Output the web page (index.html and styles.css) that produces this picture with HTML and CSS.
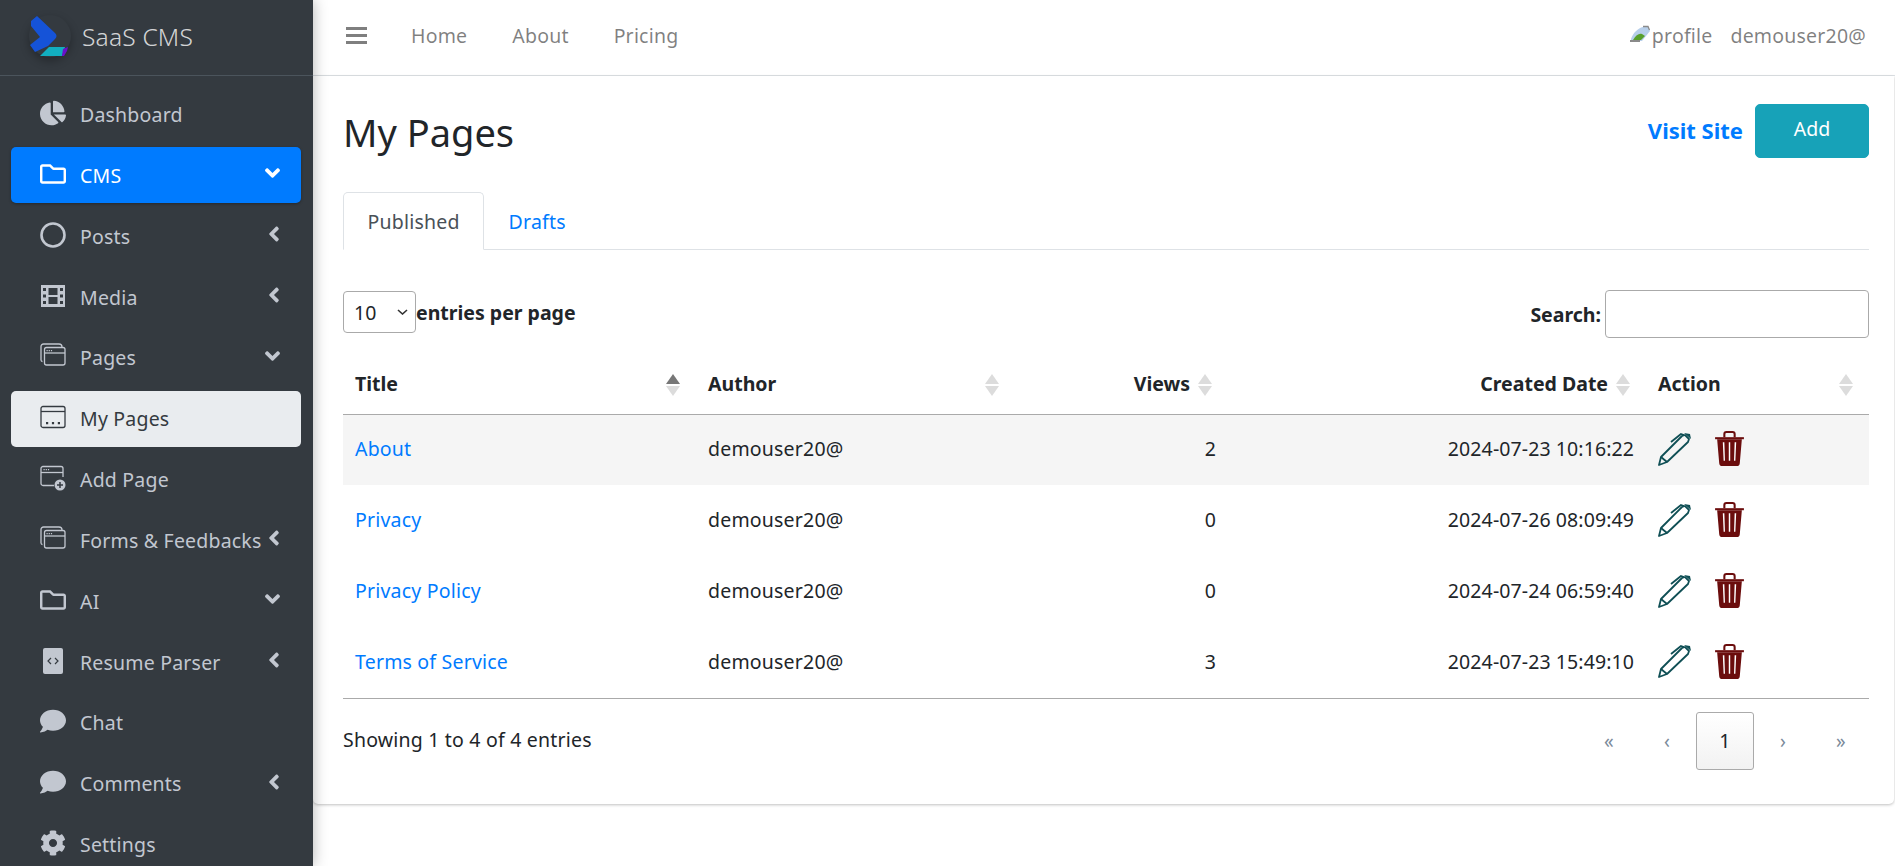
FILE: index.html
```html
<!DOCTYPE html>
<html lang="en">
<head>
    <meta charset="UTF-8">
    <meta name="viewport" content="width=device-width, initial-scale=1.0">
    <title>My Pages | SaaS CMS</title>
    <link rel="stylesheet" href="styles.css">
</head>
<body>

    <!-- Icon set -->
    <svg class="sprite" xmlns="http://www.w3.org/2000/svg">
        <symbol id="i-pie" viewBox="0 0 544 512"><path fill="currentColor" d="M527.79 288H290.5l158.03 158.03c6.04 6.04 15.98 6.53 22.19.68 38.7-36.46 65.32-85.61 73.13-140.86 1.34-9.46-6.51-17.85-16.06-17.85zm-15.83-64.8C503.72 103.74 408.26 8.28 288.8.04 279.68-.59 272 7.1 272 16.24V240h223.77c9.14 0 16.82-7.68 16.19-16.8zM224 288V50.71c0-9.55-8.39-17.4-17.84-16.06C86.99 51.49-4.1 155.6.14 280.37 4.5 408.51 114.83 513.59 243.03 511.98c50.4-.63 96.97-16.87 135.26-44.03 7.9-5.6 8.42-17.23 1.57-24.08L224 288z"/></symbol>
        <symbol id="i-folder" viewBox="0 0 512 512"><path fill="currentColor" d="M464 128H272l-54.63-54.63c-6-6-14.14-9.37-22.63-9.37H48C21.49 64 0 85.49 0 112v288c0 26.51 21.49 48 48 48h416c26.51 0 48-21.49 48-48V176c0-26.51-21.49-48-48-48zm0 272H48V112h140.12l54.63 54.63c6 6 14.14 9.37 22.63 9.37H464v224z"/></symbol>
        <symbol id="i-circle" viewBox="0 0 26 26"><circle cx="13" cy="13" r="11.5" fill="none" stroke="currentColor" stroke-width="2.6"/></symbol>
        <symbol id="i-film" viewBox="0 0 26 26"><path fill="currentColor" fill-rule="evenodd" d="M1 2h24v22H1zM8.500 5v7h9V5zM8.500 14v7h9v-7zM3 5v3h3V5zM3 11.500v3h3v-3zM3 18v3h3v-3zM20 5v3h3V5zM20 11.500v3h3v-3zM20 18v3h3v-3z"/></symbol>
        <symbol id="i-stack" viewBox="0 0 26 26"><g fill="none" stroke="currentColor" stroke-width="1.3"><rect x="4.5" y="4.5" width="20.5" height="17.5" rx="2"/><path d="M4.5 10h20.500"/><path d="M2.500 18.500A1.800 1.800 0 0 1 1 17V3.500A2.500 2.500 0 0 1 3.500 1H19a3 3 0 0 1 3 3"/></g><path fill="currentColor" d="M6.500 7h1.200v1.200H6.500zM8.700 7h1.200v1.200H8.700zM10.900 7h1.200v1.200h-1.200z"/></symbol>
        <symbol id="i-window" viewBox="0 0 26 26"><g fill="none" stroke="currentColor" stroke-width="1.300"><rect x="1" y="2.500" width="24" height="21" rx="2"/><path d="M1 7.500h24"/></g><path fill="currentColor" d="M6 18h2.200v2.200H6zM11.900 18h2.200v2.200h-2.200zM17.800 18H20v2.200h-2.200z"/></symbol>
        <symbol id="i-window-plus" viewBox="0 0 26 26"><g fill="none" stroke="currentColor" stroke-width="1.300"><path d="M14 20.500H3A2 2 0 0 1 1 18.500V3.500a2 2 0 0 1 2-2h18a2 2 0 0 1 2 2V12"/><path d="M1 7.500h22"/></g><path fill="currentColor" d="M3.500 4h1.200v1.200H3.500zM5.700 4h1.200v1.200H5.700zM7.900 4h1.200v1.200H7.900z"/><circle cx="20" cy="20" r="5.500" fill="currentColor"/><path d="M20 17v6M17 20h6" stroke="#343a40" stroke-width="1.500"/></symbol>
        <symbol id="i-code" viewBox="0 0 20 26"><rect width="20" height="26" rx="2" fill="currentColor"/><path d="M8 10l-3 3 3 3M12 10l3 3-3 3" fill="none" stroke="#343a40" stroke-width="1.200"/></symbol>
        <symbol id="i-comment" viewBox="0 0 512 512"><path fill="currentColor" d="M256 32C114.600 32 0 125.100 0 240c0 49.600 21.400 95 57 130.700C44.500 421.100 2.700 466 2.200 466.500c-2.200 2.300-2.800 5.700-1.500 8.700S4.800 480 8 480c66.300 0 116-31.800 140.600-51.400 32.700 12.300 69 19.400 107.400 19.400 141.400 0 256-93.100 256-208S397.400 32 256 32z"/></symbol>
        <symbol id="i-cog" viewBox="0 0 512 512"><path fill="currentColor" d="M487.400 315.700l-42.600-24.600c4.300-23.200 4.300-47 0-70.200l42.600-24.600c4.900-2.800 7.100-8.600 5.500-14-11.100-35.600-30-67.800-54.700-94.600-3.800-4.100-10-5.100-14.800-2.300L380.800 110c-17.900-15.400-38.500-27.300-60.800-35.100V25.800c0-5.600-3.900-10.500-9.400-11.700-36.700-8.200-74.300-7.800-109.200 0-5.500 1.200-9.400 6.100-9.400 11.700V75c-22.200 7.900-42.800 19.800-60.800 35.100L88.700 85.500c-4.900-2.800-11-1.900-14.800 2.300-24.700 26.700-43.600 58.900-54.700 94.600-1.700 5.400.6 11.200 5.500 14L67.300 221c-4.300 23.200-4.300 47 0 70.200l-42.600 24.600c-4.900 2.800-7.100 8.600-5.500 14 11.100 35.600 30 67.800 54.700 94.600 3.800 4.100 10 5.100 14.800 2.300l42.600-24.600c17.900 15.400 38.500 27.300 60.800 35.100v49.200c0 5.600 3.900 10.500 9.400 11.700 36.700 8.200 74.300 7.800 109.200 0 5.500-1.200 9.400-6.100 9.400-11.700v-49.200c22.200-7.900 42.800-19.800 60.800-35.100l42.600 24.600c4.900 2.800 11 1.900 14.800-2.300 24.700-26.700 43.600-58.900 54.700-94.600 1.500-5.500-.7-11.300-5.600-14.100zM256 336c-44.100 0-80-35.900-80-80s35.900-80 80-80 80 35.900 80 80-35.900 80-80 80z"/></symbol>
        <symbol id="i-left" viewBox="0 0 256 512"><path fill="currentColor" d="M31.700 239l136-136c9.400-9.400 24.600-9.400 33.900 0l22.600 22.600c9.400 9.400 9.400 24.600 0 33.900L127.900 256l96.400 96.400c9.400 9.400 9.400 24.600 0 33.900L201.700 409c-9.400 9.400-24.600 9.400-33.900 0l-136-136c-9.500-9.400-9.500-24.600-.1-34z"/></symbol>
        <symbol id="i-down" viewBox="0 0 320 512"><path fill="currentColor" d="M143 352.300L7 216.300c-9.400-9.400-9.400-24.600 0-33.900l22.600-22.600c9.400-9.400 24.600-9.400 33.900 0l96.400 96.400 96.400-96.400c9.400-9.400 24.600-9.400 33.900 0l22.600 22.600c9.400 9.400 9.400 24.600 0 33.900l-136 136c-9.200 9.400-24.400 9.400-33.800 0z"/></symbol>
        <symbol id="i-pen" viewBox="0 0 34 34"><g fill="none" stroke="#0f4f55" stroke-width="1.800" stroke-linejoin="round"><path d="M1 33l2-8L24 4l3-1 4 4-1 3-21 20z"/><path d="M3 25l6 5M13 10l10-8 3 1"/></g><path fill="#0f4f55" d="M26 1l6 1 1 5z"/></symbol>
        <symbol id="i-trash" viewBox="0 0 30 34"><path fill="#6b0d0d" d="M1 6h28v2H1z"/><path fill="none" stroke="#6b0d0d" stroke-width="2" d="M10 6V3a2 2 0 0 1 2-2h6a2 2 0 0 1 2 2v3"/><path fill="#6b0d0d" d="M3 8h24l-2 23a3 3 0 0 1-3 3H8a3 3 0 0 1-3-3z"/><path fill="#fff" d="M8.500 11h1.500l.6 18H9.300zM14.300 11h1.400v18h-1.400zM20 11h1.500l-.8 18h-1.300z"/></symbol>
    </svg>

    <aside class="sidebar">
        <div class="brand">
            <span class="brand-logo">
                <svg viewBox="0 0 42 42" width="42" height="42">
                    <path fill="#1553d8" d="M2 6l6-5 18 17c2 2 2 4 0 6l-7 7-13 6-5-7 10-8L2 11z"/>
                    <path fill="#12aebf" d="M11 41l9-9h16l-3 9z"/>
                    <path fill="#6a11cb" d="M34 34l5-2-1 4-3 5h-2z"/>
                </svg>
            </span>
            <span class="brand-text">SaaS CMS</span>
        </div>
        <nav>
            <a class="nav-item"><svg class="nav-icon"><use href="#i-pie"/></svg>Dashboard</a>
            <a class="nav-item nav-primary"><svg class="nav-icon"><use href="#i-folder"/></svg>CMS<svg class="caret-down"><use href="#i-down"/></svg></a>
            <a class="nav-item"><svg class="nav-icon"><use href="#i-circle"/></svg>Posts<svg class="caret-left"><use href="#i-left"/></svg></a>
            <a class="nav-item"><svg class="nav-icon"><use href="#i-film"/></svg>Media<svg class="caret-left"><use href="#i-left"/></svg></a>
            <a class="nav-item"><svg class="nav-icon"><use href="#i-stack"/></svg>Pages<svg class="caret-down"><use href="#i-down"/></svg></a>
            <a class="nav-item nav-current"><svg class="nav-icon"><use href="#i-window"/></svg>My Pages</a>
            <a class="nav-item"><svg class="nav-icon"><use href="#i-window-plus"/></svg>Add Page</a>
            <a class="nav-item"><svg class="nav-icon"><use href="#i-stack"/></svg>Forms &amp; Feedbacks<svg class="caret-left"><use href="#i-left"/></svg></a>
            <a class="nav-item"><svg class="nav-icon"><use href="#i-folder"/></svg>AI<svg class="caret-down"><use href="#i-down"/></svg></a>
            <a class="nav-item"><svg class="nav-icon"><use href="#i-code"/></svg>Resume Parser<svg class="caret-left"><use href="#i-left"/></svg></a>
            <a class="nav-item"><svg class="nav-icon"><use href="#i-comment"/></svg>Chat</a>
            <a class="nav-item"><svg class="nav-icon"><use href="#i-comment"/></svg>Comments<svg class="caret-left"><use href="#i-left"/></svg></a>
            <a class="nav-item"><svg class="nav-icon"><use href="#i-cog"/></svg>Settings</a>
        </nav>
    </aside>

    <div class="main">
        <header class="topbar">
            <span class="hamburger"><i></i><i></i><i></i></span>
            <a class="top-link">Home</a>
            <a class="top-link">About</a>
            <a class="top-link">Pricing</a>
            <span class="top-user">
                <svg class="broken-img" viewBox="0 0 21 18" width="21" height="18">
                    <path fill="#b7cfea" d="M1 14C3 8 8 3 13 2h5l2 4-8 10H1z"/>
                    <path fill="#58a02c" d="M3 15c3-5 6-7 9-6l3 2-4 4z"/>
                    <path fill="none" stroke="#8a8a8a" stroke-width="1.300" d="M13 1.500h5l1.500 3.500"/>
                    <path fill="#8a8a8a" d="M0 15h10v2H0z"/>
                </svg><span class="alt-text">profile</span>
                <span class="user-name">demouser20@</span>
            </span>
        </header>

        <section class="card">
            <div class="page-head">
                <h1>My Pages</h1>
                <div class="page-actions">
                    <a class="visit-link">Visit Site</a>
                    <button class="add-button">Add</button>
                </div>
            </div>

            <div class="tabs">
                <a class="tab tab-active">Published</a>
                <a class="tab">Drafts</a>
            </div>

            <div class="table-tools">
                <label class="per-page">
                    <select>
                        <option>10</option>
                    </select>entries per page
                </label>
                <label class="search">Search: <input type="text"></label>
            </div>

            <table>
                <thead>
                    <tr>
                        <th class="col-title sort-up">Title</th>
                        <th class="col-author">Author</th>
                        <th class="col-views num">Views</th>
                        <th class="col-date num">Created Date</th>
                        <th class="col-action">Action</th>
                    </tr>
                </thead>
                <tbody>
                    <tr class="odd">
                        <td><a>About</a></td>
                        <td>demouser20@</td>
                        <td class="num">2</td>
                        <td class="num">2024-07-23 10:16:22</td>
                        <td class="actions"><svg class="pen"><use href="#i-pen"/></svg><svg class="trash"><use href="#i-trash"/></svg></td>
                    </tr>
                    <tr>
                        <td><a>Privacy</a></td>
                        <td>demouser20@</td>
                        <td class="num">0</td>
                        <td class="num">2024-07-26 08:09:49</td>
                        <td class="actions"><svg class="pen"><use href="#i-pen"/></svg><svg class="trash"><use href="#i-trash"/></svg></td>
                    </tr>
                    <tr>
                        <td><a>Privacy Policy</a></td>
                        <td>demouser20@</td>
                        <td class="num">0</td>
                        <td class="num">2024-07-24 06:59:40</td>
                        <td class="actions"><svg class="pen"><use href="#i-pen"/></svg><svg class="trash"><use href="#i-trash"/></svg></td>
                    </tr>
                    <tr>
                        <td><a>Terms of Service</a></td>
                        <td>demouser20@</td>
                        <td class="num">3</td>
                        <td class="num">2024-07-23 15:49:10</td>
                        <td class="actions"><svg class="pen"><use href="#i-pen"/></svg><svg class="trash"><use href="#i-trash"/></svg></td>
                    </tr>
                </tbody>
            </table>

            <div class="table-foot">
                <span class="table-info">Showing 1 to 4 of 4 entries</span>
                <div class="pager">
                    <a>«</a>
                    <a>‹</a>
                    <a class="pager-current">1</a>
                    <a>›</a>
                    <a>»</a>
                </div>
            </div>
        </section>
    </div>

</body>
</html>
```

FILE: styles.css
```css
* {
    margin: 0;
    padding: 0;
    box-sizing: border-box;
}

body {
    font-family: "Noto Sans", "Open Sans", sans-serif;
    font-size: 19.5px;
    letter-spacing: 0.2px;
    color: #212529;
    background-color: #fff;
    display: flex;
    height: 866px;
    overflow: hidden;
}

.sprite {
    display: none;
}

/* Sidebar */
.sidebar {
    width: 313px;
    flex-shrink: 0;
    height: 866px;
    overflow: hidden;
    background-color: #343a40;
    box-shadow: 0 0 14px rgba(0, 0, 0, 0.3);
    position: relative;
    z-index: 2;
}

.brand {
    height: 76px;
    display: flex;
    align-items: center;
    padding-left: 29px;
    border-bottom: 1px solid #4b545c;
}

.brand-logo {
    width: 42px;
    height: 42px;
    border-radius: 50%;
    box-shadow: 0 4px 10px rgba(0, 0, 0, 0.3);
    margin-right: 11px;
    margin-top: -4px;
}

.brand-text {
    font-size: 24.5px;
    font-weight: 300;
    color: rgba(255, 255, 255, 0.8);
    margin-top: -2px;
}

nav {
    display: flex;
    flex-direction: column;
    gap: 4.85px;
    padding: 10.5px 12px 0 11px;
}

.nav-item {
    height: 56px;
    flex-shrink: 0;
    display: flex;
    align-items: center;
    padding-left: 29px;
    border-radius: 5px;
    color: #c2c7d0;
    white-space: nowrap;
}

.nav-icon {
    width: 26px;
    height: 26px;
    margin-right: 14px;
    margin-top: -3px;
    flex-shrink: 0;
}

.nav-primary {
    background-color: #007bff;
    color: #fff;
    box-shadow: 0 1px 3px rgba(0, 0, 0, 0.3);
}

.nav-current {
    background-color: #e9ecef;
    color: #343a40;
}

.caret-down,
.caret-left {
    margin-left: auto;
    height: 24px;
    margin-top: -4px;
}

.caret-down {
    width: 17px;
    margin-right: 20px;
}

.caret-left {
    width: 12px;
    margin-right: 21px;
}

/* Top bar and main area */
.main {
    flex: 1;
    min-width: 0;
}

.topbar {
    height: 76px;
    display: flex;
    align-items: center;
    padding-left: 33px;
    padding-right: 29px;
    padding-bottom: 4px;
    border-bottom: 1px solid #dee2e6;
    color: rgba(0, 0, 0, 0.5);
}

.hamburger {
    width: 21px;
    display: flex;
    flex-direction: column;
    gap: 4px;
    margin-right: 44px;
}

.hamburger i {
    height: 3px;
    background-color: rgba(0, 0, 0, 0.5);
}

.top-link {
    margin-right: 45px;
}

.top-user {
    margin-left: auto;
    display: flex;
    align-items: center;
}

.broken-img {
    margin-top: -4px;
    margin-right: 1px;
}

.user-name {
    margin-left: 18px;
}

.card {
    height: 728px;
    padding: 0 25px 0 30px;
    border-radius: 0 0 5px 5px;
    box-shadow: 0 1px 3px rgba(0, 0, 0, 0.25);
    margin-right: 1px;
}

.page-head {
    height: 116px;
    display: flex;
    align-items: center;
    justify-content: space-between;
}

h1 {
    font-size: 38px;
    font-weight: 400;
    letter-spacing: 0;
    margin-top: -5px;
}

.page-actions {
    display: flex;
    align-items: center;
    margin-top: -7px;
}

.visit-link {
    color: #007bff;
    font-size: 22px;
    font-weight: 700;
    letter-spacing: 0;
    margin-right: 12px;
    margin-bottom: 2px;
}

.add-button {
    width: 114px;
    height: 54px;
    border: 1px solid #17a2b8;
    border-radius: 5px;
    background-color: #17a2b8;
    color: #fff;
    font-family: inherit;
    font-size: 19.5px;
    padding-bottom: 5px;
}

.tabs {
    display: flex;
    height: 58px;
    border-bottom: 1px solid #dee2e6;
}

.tab {
    padding: 0 23.5px;
    height: 58px;
    line-height: 57px;
    color: #007bff;
    border: 1px solid transparent;
    border-radius: 5px 5px 0 0;
}

.tab-active {
    color: #495057;
    background-color: #fff;
    border-color: #dee2e6 #dee2e6 #fff;
}

.table-tools {
    height: 106px;
    padding-top: 41px;
    display: flex;
    justify-content: space-between;
    align-items: flex-start;
    font-weight: 700;
    letter-spacing: 0;
}

.per-page {
    display: flex;
    align-items: center;
    height: 42px;
}

select {
    appearance: none;
    width: 73px;
    height: 42px;
    padding-left: 10px;
    font-family: inherit;
    font-size: 19.5px;
    color: #212529;
    background: #fff url("data:image/svg+xml,%3Csvg xmlns='http://www.w3.org/2000/svg' viewBox='0 0 11 6'%3E%3Cpath d='M1 1l4.500 4L10 1' fill='none' stroke='%23333' stroke-width='1.600'/%3E%3C/svg%3E") no-repeat right 7px center / 11px 6px;
    border: 1px solid #aaa;
    border-radius: 4px;
}

.search {
    display: flex;
    align-items: center;
    gap: 4px;
    height: 48px;
    margin-top: -1px;
}

.search input {
    width: 264px;
    height: 48px;
    border: 1px solid #aaa;
    border-radius: 4px;
    background-color: #fff;
}

/* Table */
table {
    width: 100%;
    table-layout: fixed;
    border-collapse: collapse;
    border-bottom: 1px solid #aaa;
}

th {
    height: 58px;
    padding: 0 12px 2px;
    text-align: left;
    letter-spacing: 0;
    border-bottom: 1px solid #aaa;
    position: relative;
}

th::before,
th::after {
    content: "";
    position: absolute;
    right: 16px;
    border-left: 7px solid transparent;
    border-right: 7px solid transparent;
}

th::before {
    top: 18px;
    border-bottom: 10px solid #dcdcdc;
}

th::after {
    top: 30px;
    border-top: 10px solid #dcdcdc;
}

th.sort-up::before {
    border-bottom-color: #777;
}

th.num {
    text-align: right;
    padding-right: 38px;
}

.col-title {
    width: 353px;
}

.col-author {
    width: 319px;
}

.col-views {
    width: 213px;
}

.col-date {
    width: 418px;
}

td {
    height: 71px;
    padding: 0 12px 2px;
}

td.num {
    text-align: right;
    letter-spacing: 0.1px;
}

td a {
    color: #007bff;
}

tr.odd td {
    background-color: #f5f5f5;
}

.actions {
    white-space: nowrap;
}

.actions svg {
    vertical-align: middle;
}

.pen {
    width: 34px;
    height: 34px;
    margin-right: 22px;
}

.trash {
    width: 31px;
    height: 35px;
}

.table-foot {
    display: flex;
    align-items: center;
    justify-content: space-between;
    padding-top: 13px;
}

.table-info {
    margin-top: -2px;
}

.pager {
    display: flex;
    margin-right: -1px;
}

.pager a {
    width: 58px;
    height: 58px;
    display: flex;
    align-items: center;
    justify-content: center;
    color: #7b8a9a;
    font-size: 19px;
}

.pager a.pager-current {
    color: #212529;
    font-size: 19.5px;
    border: 1px solid #aaa;
    border-radius: 3px;
    background: linear-gradient(#fff, #f2f2f2);
}
```
